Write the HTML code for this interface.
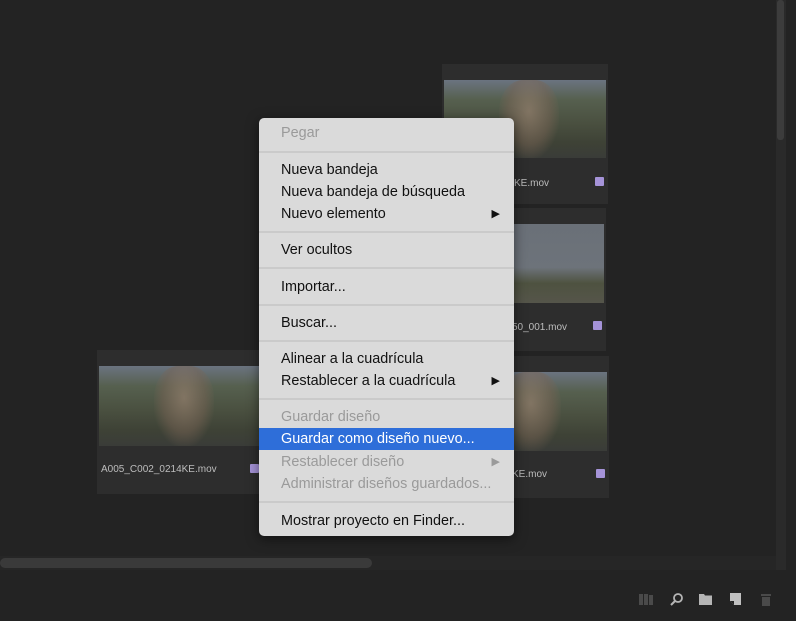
<!DOCTYPE html>
<html><head><style>
*{margin:0;padding:0;box-sizing:border-box}
body{width:796px;height:621px;background:#232323;position:relative;overflow:hidden;font-family:"Liberation Sans",sans-serif}
.abs{position:absolute}
.tile{position:absolute;background:#2d2d2d}
.img{position:absolute;background:linear-gradient(180deg,#6b7480 0%,#56604f 25%,#4a5040 55%,#3e4236 80%,#3a3c38 100%)}
.face{position:absolute;border-radius:40%;background:radial-gradient(ellipse at 50% 40%,rgba(150,128,110,.7) 0%,rgba(120,100,85,.5) 50%,rgba(70,60,50,0) 75%)}
.lbl{position:absolute;color:#bdbdbd;font-size:10px}
.sq{position:absolute;width:9px;height:9px;background:#a593d8;border-radius:1px}
.menu{position:absolute;left:259px;top:118px;width:255px;height:418px;background:#dadada;border-radius:5px;box-shadow:0 3px 12px rgba(0,0,0,.5)}
.it{position:absolute;left:0;width:255px;height:22px;line-height:22px;padding-left:22px;font-size:14.4px;color:#111}
.dis{color:#9a9a9a}
.sel{background:#2e6ed9;color:#fff}
.sep{position:absolute;left:0;width:255px;height:2px;background:#cacaca}
.arr{position:absolute;right:14px;top:0;font-size:11px}
</style></head><body>
<div class="abs" style="left:776px;top:0;width:10px;height:570px;background:#2a2a2a"></div>
<div class="abs" style="left:777px;top:0;width:7px;height:140px;background:#3c3c3c;border-radius:3px"></div>
<div class="abs" style="left:0;top:556px;width:776px;height:14px;background:#262626"></div>
<div class="abs" style="left:0;top:558px;width:372px;height:10px;background:#3a3a3a;border-radius:5px"></div>
<div class="abs" style="left:0;top:570px;width:796px;height:51px;background:#232323"></div>

<div class="tile" style="left:442px;top:64px;width:166px;height:140px">
<div class="img" style="left:2px;top:16px;width:162px;height:78px"><div class="face" style="left:55px;top:0;width:60px;height:78px"></div></div>
<div class="lbl" style="left:72px;top:114px">KE.mov</div><div class="sq" style="left:153px;top:113px"></div></div>
<div class="tile" style="left:440px;top:208px;width:166px;height:143px">
<div class="img" style="left:73px;top:16px;width:91px;height:79px;background:linear-gradient(180deg,#6a7078 0%,#6d737a 55%,#4e5240 75%,#55554a 100%)"></div>
<div class="lbl" style="left:72px;top:114px">50_001.mov</div><div class="sq" style="left:153px;top:113px"></div></div>
<div class="tile" style="left:444px;top:356px;width:165px;height:142px">
<div class="img" style="left:2px;top:16px;width:161px;height:79px"><div class="face" style="left:55px;top:0;width:60px;height:79px"></div></div>
<div class="lbl" style="left:68px;top:113px">KE.mov</div><div class="sq" style="left:152px;top:113px"></div></div>
<div class="tile" style="left:97px;top:350px;width:166px;height:144px">
<div class="img" style="left:2px;top:16px;width:162px;height:80px"><div class="face" style="left:55px;top:0;width:60px;height:80px"></div></div>
<div class="lbl" style="left:4px;top:114px">A005_C002_0214KE.mov</div><div class="sq" style="left:153px;top:114px"></div></div>

<div class="menu">
<div class="it dis" style="top:4px">Pegar</div>
<div class="sep" style="top:33px"></div>
<div class="it" style="top:41px">Nueva bandeja</div>
<div class="it" style="top:63px">Nueva bandeja de búsqueda</div>
<div class="it" style="top:85px">Nuevo elemento<span class="arr">▶</span></div>
<div class="sep" style="top:113px"></div>
<div class="it" style="top:121px">Ver ocultos</div>
<div class="sep" style="top:149px"></div>
<div class="it" style="top:158px">Importar...</div>
<div class="sep" style="top:186px"></div>
<div class="it" style="top:194px">Buscar...</div>
<div class="sep" style="top:222px"></div>
<div class="it" style="top:230px">Alinear a la cuadrícula</div>
<div class="it" style="top:252px">Restablecer a la cuadrícula<span class="arr">▶</span></div>
<div class="sep" style="top:280px"></div>
<div class="it dis" style="top:288px">Guardar diseño</div>
<div class="it sel" style="top:310px">Guardar como diseño nuevo...</div>
<div class="it dis" style="top:333px">Restablecer diseño<span class="arr">▶</span></div>
<div class="it dis" style="top:355px">Administrar diseños guardados...</div>
<div class="sep" style="top:383px"></div>
<div class="it" style="top:392px">Mostrar proyecto en Finder...</div>
</div>

<svg class="abs" style="left:630px;top:588px" width="150" height="24">
<g fill="#4a4a4a"><rect x="9" y="6" width="4" height="11"/><rect x="14" y="6" width="4" height="11"/><rect x="19" y="7" width="4" height="10"/></g>
<circle cx="48" cy="10" r="4" fill="none" stroke="#b5b5b5" stroke-width="1.8"/><line x1="45" y1="13" x2="41" y2="17" stroke="#b5b5b5" stroke-width="2"/>
<path d="M69 6h5l1 1.5h7v9.5h-13z" fill="#b5b5b5"/>
<path d="M100 5h11v12h-7l-4-4z" fill="#c0c0c0"/><path d="M100 13h4v4z" fill="#232323"/>
<g fill="#4a4a4a"><rect x="131" y="6" width="10" height="2"/><rect x="132" y="9" width="8" height="9"/></g>
</svg>
</body></html>
